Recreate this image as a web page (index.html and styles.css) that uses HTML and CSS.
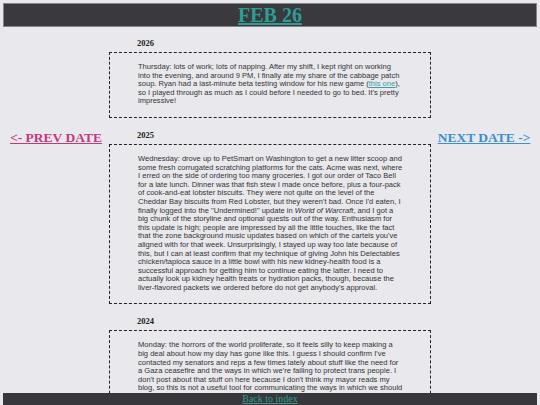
FILE: index.html
```html
<!DOCTYPE html>
<html lang="en">
  <head>
    <meta charset="UTF-8" />
    <meta name="viewport" content="width=device-width, initial-scale=1.0" />
    <title>Feb 26</title>
    <link rel="stylesheet" href="styles.css">
  </head>
  <body>
    <header class="top-bar">
      <h1 class="day-title"><a href="#">FEB 26</a></h1>
    </header>

    <div class="layout">
      <nav class="side side-prev">
        <a href="#" class="prev-link">&lt;- PREV DATE</a>
      </nav>

      <main class="entries">
        <section class="entry">
          <h2 class="entry-year">2026</h2>
          <div class="entry-box">
            <p>
              Thursday: lots of work; lots of napping. After my shift, I kept
              right on working into the evening, and around 9 PM, I finally ate
              my share of the cabbage patch soup. Ryan had a last-minute beta
              testing window for his new game (<a href="#">this one</a>), so I
              played through as much as I could before I needed to go to bed.
              It's pretty impressive!
            </p>
          </div>
        </section>

        <section class="entry">
          <h2 class="entry-year">2025</h2>
          <div class="entry-box">
            <p>
              Wednesday: drove up to PetSmart on Washington to get a new litter
              scoop and some fresh corrugated scratching platforms for the cats.
              Acme was next, where I erred on the side of ordering too many
              groceries. I got our order of Taco Bell for a late lunch. Dinner
              was that fish stew I made once before, plus a four-pack of
              cook-and-eat lobster biscuits. They were not quite on the level of
              the Cheddar Bay biscuits from Red Lobster, but they weren't bad.
              Once I'd eaten, I finally logged into the "Undermined!" update in
              <em>World of Warcraft</em>, and I got a big chunk of the storyline
              and optional quests out of the way. Enthusiasm for this update is
              high; people are impressed by all the little touches, like the
              fact that the zone background music updates based on which of the
              cartels you've aligned with for that week. Unsurprisingly, I
              stayed up way too late because of this, but I can at least
              confirm that my technique of giving John his Delectables
              chicken/tapioca sauce in a little bowl with his new kidney-health
              food is a successful approach for getting him to continue eating
              the latter. I need to actually look up kidney health treats or
              hydration packs, though, because the liver-flavored packets we
              ordered before do not get anybody's approval.
            </p>
          </div>
        </section>

        <section class="entry">
          <h2 class="entry-year">2024</h2>
          <div class="entry-box">
            <p>
              Monday: the horrors of the world proliferate, so it feels silly to
              keep making a big deal about how my day has gone like this. I
              guess I should confirm I've contacted my senators and reps a few
              times lately about stuff like the need for a Gaza ceasefire and
              the ways in which we're failing to protect trans people. I don't
              post about that stuff on here because I don't think my mayor reads
              my blog, so this is not a useful tool for communicating the ways
              in which we should be doing better.
            </p>
          </div>
        </section>
      </main>

      <nav class="side side-next">
        <a href="#" class="next-link">NEXT DATE -&gt;</a>
      </nav>
    </div>

    <footer class="bottom-bar">
      <a href="#">Back to index</a>
    </footer>
  </body>
</html>
```

FILE: styles.css
```css
body {
  margin: 3px;
  background-color: #e9e8ed;
  font-family: "Liberation Serif", serif;
  color: #222222;
}
.top-bar {
  height: 22px;
  background-color: #3a393e;
  border: 1px solid #85848a;
  text-align: center;
}
.day-title {
  margin: 0;
  font-size: 20px;
  line-height: 22px;
}
.day-title a {
  color: #2e9e92;
}
.layout {
  display: grid;
  grid-template-columns: 1fr 322px 1fr;
  margin: 0 -3px;
  padding-bottom: 40px;
}
.side {
  padding-top: 103px;
  text-align: center;
  font-size: 13.5px;
  font-weight: bold;
}
.side-prev {
  padding-left: 3px;
}
.side-next {
  padding-right: 3px;
}
.prev-link {
  color: #c4397d;
}
.next-link {
  color: #3b8fd2;
}
.entry-year {
  margin: 12px 0 4px 28px;
  font-size: 8.5px;
  line-height: 10px;
}
.entry:first-child .entry-year {
  margin-top: 11px;
}
.entry-box {
  border: 1px dashed #222222;
  padding: 0 26px 0 28px;
}
.entry-box p {
  margin: 10px 0 11px;
  font-family: "Liberation Sans", sans-serif;
  font-size: 7.55px;
  line-height: 8.6px;
  color: #333333;
}
.entry-box a {
  color: #3aa0a3;
}
.bottom-bar {
  position: fixed;
  left: 3px;
  right: 3px;
  bottom: 0;
  height: 12px;
  background-color: #38373c;
  text-align: center;
  font-size: 10px;
  line-height: 12px;
}
.bottom-bar a {
  color: #2e9e92;
}
```
